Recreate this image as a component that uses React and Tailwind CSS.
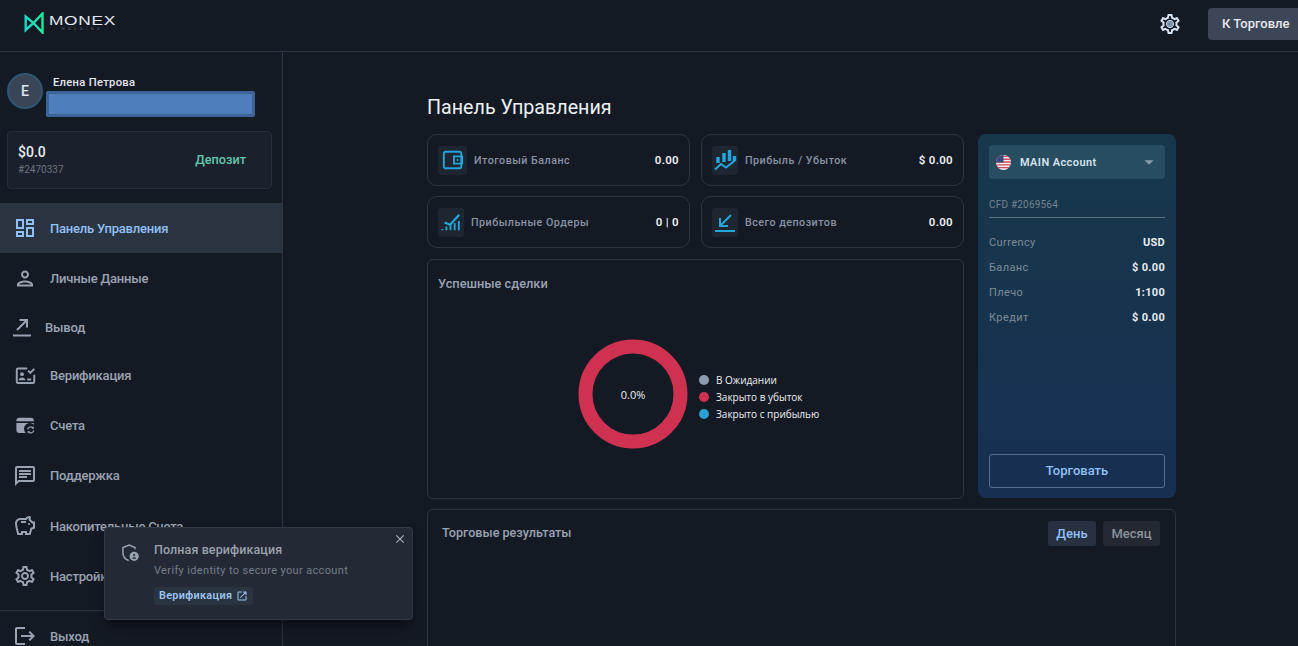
import React from 'react';
import {
  MdOutlineDashboard,
  MdOutlinePerson,
  MdOutlineChat,
  MdOutlineSavings,
  MdOutlineSettings,
  MdOutlineOpenInNew,
  MdClose,
  MdArrowDropDown,
  MdLogout,
} from 'react-icons/md';

const font = 'font-[Roboto,"Liberation_Sans",sans-serif]';

function WithdrawIcon() {
  return (
    <svg viewBox="0 0 24 24" className="h-[24px] w-[24px]" fill="none" stroke="currentColor" strokeWidth="2">
      <path d="M6 15 15.500 5.500M8.500 5h7.500v7.500" transform="translate(1 0)" />
      <path d="M3 20.500h18" />
    </svg>
  );
}

function VerifyIcon() {
  return (
    <svg viewBox="0 0 24 24" className="h-[21px] w-[21px]" fill="none" stroke="currentColor" strokeWidth="2.200">
      <path d="M14 4H3.500A1.500 1.500 0 0 0 2 5.500V19a1.500 1.500 0 0 0 1.500 1.500h17A1.500 1.500 0 0 0 22 19v-8" />
      <circle cx="8" cy="10.500" r="2.200" fill="currentColor" stroke="none" />
      <path d="M4 17.500c.5-2.200 2.200-3.200 4-3.200s3.500 1 4 3.200z" fill="currentColor" stroke="none" />
      <path d="M14 16.500h4.500M15 6.500l2.500 2.500 4.500-4.500" />
    </svg>
  );
}

function AccountsIcon() {
  return (
    <svg viewBox="0 0 24 24" className="h-[21px] w-[21px]" fill="currentColor">
      <path d="M5 3h13a3.500 3.500 0 0 1 3.500 3.500V7H1.600v-.5A3.500 3.500 0 0 1 5 3z" />
      <path d="M1.600 9h19.900v2.200a6.500 6.500 0 0 0-9.300 9.300H5a3.400 3.400 0 0 1-3.400-3.400z" />
      <path d="M14.500 16.500a3.500 3.500 0 0 1 6-1.800M21.500 17.500a3.500 3.500 0 0 1-6 1.800" fill="none" stroke="currentColor" strokeWidth="1.400" />
      <path d="M21.500 12.800v2.800h-2.800zM14.500 21.200v-2.800h2.800z" />
    </svg>
  );
}

function Logo() {
  return (
    <div className="flex items-center gap-[5px]">
      <svg viewBox="0 0 20 22" className="h-[22px] w-[20px]" fill="none" strokeWidth="2.400">
        <defs>
          <linearGradient id="logoMark" x1="0" x2="1" y1="0" y2="0">
            <stop offset="0" stopColor="#1ad6c4" />
            <stop offset="1" stopColor="#19eb9e" />
          </linearGradient>
        </defs>
        <path d="M1.700 4.500v13.500l7.800-7zM18.500 1.500v19L9.500 11z" stroke="url(#logoMark)" />
      </svg>
      <div className="mt-[2px] flex w-[67px] flex-col">
        <span className="block w-max origin-left scale-x-[1.44] text-[12px] leading-[11px] font-medium tracking-[0.5px] text-[#e8ecf2] font-['Liberation_Sans',sans-serif]">MONEX</span>
        <span className="text-center text-[4px] leading-[4px] tracking-[3.500px] text-[#5d6673]">HOLDING</span>
      </div>
    </div>
  );
}

const navItems = [
  { label: 'Панель Управления', icon: <MdOutlineDashboard size={24} />, h: 'h-[50px]', active: true },
  { label: 'Личные Данные', icon: <MdOutlinePerson size={27} />, h: 'h-[50px]' },
  { label: 'Вывод', icon: <WithdrawIcon />, h: 'h-[48px]', narrow: true },
  { label: 'Верификация', icon: <VerifyIcon />, h: 'h-[49px]' },
  { label: 'Счета', icon: <AccountsIcon />, h: 'h-[50px]' },
  { label: 'Поддержка', icon: <MdOutlineChat size={24} />, h: 'h-[51px]' },
  { label: 'Накопительные Счета', icon: <MdOutlineSavings size={24} />, h: 'h-[50px]' },
  { label: 'Настройки', icon: <MdOutlineSettings size={24} />, h: 'h-[50px]' },
];

function NavItem({ item }) {
  return (
    <div
      className={`flex items-center ${item.h} ${item.narrow ? 'pl-[10px] gap-[11px]' : 'pl-[13px] gap-[13px]'} ${
        item.active ? 'bg-[#2a3441] text-[#90c0f8]' : 'text-[#9aa3b2]'
      }`}
    >
      <span className="flex w-[24px] justify-center">{item.icon}</span>
      <span className="pt-[1px] text-[13px] font-medium tracking-[-0.2px]">{item.label}</span>
    </div>
  );
}

function Sidebar() {
  return (
    <aside className="flex h-full w-[283px] shrink-0 flex-col border-r border-[#2d3540]">
      <div className="flex h-[79px] shrink-0 items-start pt-[21px] pl-[7px]">
        <div className="flex h-[36px] w-[36px] items-center justify-center rounded-full border-2 border-[#2f5672] bg-[#3a4658] text-[14px] font-medium text-[#dfe5ee]">
          Е
        </div>
        <div className="ml-[3px] flex flex-col pt-[1px]">
          <span className="ml-[7px] text-[11.200px] leading-[17px] font-medium tracking-[0.3px] text-[#e4e8ee]">Елена Петрова</span>
          <div className="h-[26px] w-[209px] rounded-[2px] border-[3px] border-[#3d6496] bg-[#4e7fbc]" />
        </div>
      </div>
      <div className="mx-[7px] flex h-[58px] w-[265px] shrink-0 items-center justify-between rounded-[4px] border border-[#262e3a] bg-[#1b212c] pr-[25px] pl-[10px]">
        <div>
          <div className="text-[14px] leading-[18px] font-medium text-[#e8ecf2]">$0.0</div>
          <div className="mt-[1px] text-[10px] leading-[16px] text-[#6d7480]">#2470337</div>
        </div>
        <span className="text-[12.700px] font-medium text-[#62c6ad]">Депозит</span>
      </div>
      <nav className="mt-[14px] shrink-0">
        {navItems.map((item) => (
          <NavItem key={item.label} item={item} />
        ))}
      </nav>
      <div className="mt-[9px] shrink-0 border-t border-[#2d3540] pt-[13px] pl-[13px] text-[#9aa3b2]">
        <div className="flex items-center gap-[13px]">
          <MdLogout size={24} />
          <span className="pt-[1px] text-[13px] font-medium tracking-[-0.2px]">Выход</span>
        </div>
      </div>
    </aside>
  );
}

function WalletIcon() {
  return (
    <svg viewBox="0 0 24 24" className="h-[22px] w-[22px]" fill="none" stroke="#22a7dc" strokeWidth="2">
      <rect x="2" y="3" width="19" height="18" rx="2" />
      <path d="M22 8h-9v8h9z" />
      <circle cx="17" cy="12" r="1.200" fill="#22a7dc" stroke="none" />
    </svg>
  );
}

function OrdersIcon() {
  return (
    <svg viewBox="0 0 24 24" className="h-[22px] w-[22px]" fill="none" stroke="#22a7dc">
      <path d="M2.500 21v-1.500M7 21v-4M11.500 21v-6M16 21v-8M20.500 21V11" strokeWidth="2" />
      <path d="M5 12.500 11 15l10-11" strokeWidth="2.400" />
    </svg>
  );
}

function ProfitIcon() {
  return (
    <svg viewBox="0 0 24 24" className="h-[24px] w-[24px]" fill="none" stroke="#22a7dc" strokeWidth="3.400">
      <path d="M5 15V9M11 14V5M16.500 13V2M21.500 13V8" />
      <path d="M2 21.500l6-5.500 5 3.500 9-7" strokeWidth="2" />
    </svg>
  );
}

function DepositIcon() {
  return (
    <svg viewBox="0 0 24 24" className="h-[24px] w-[24px]" fill="none" stroke="#22a7dc" strokeWidth="2">
      <path d="M18 5 7.500 15.500M7 8v8h8" />
      <path d="M2 21h20" />
    </svg>
  );
}

function StatCard({ icon, label, value, wide }) {
  return (
    <div className="flex h-[52px] items-center rounded-[10px] border border-[#2d3540] px-[10px]">
      <span className={`flex h-[29px] items-center justify-center rounded-[3px] bg-[#1e2631] ${wide ? 'w-[29px]' : 'w-[26px]'}`}>{icon}</span>
      <span className="ml-[7px] pt-[2px] text-[10.700px] font-medium tracking-[0.5px] text-[#8a93a3]">{label}</span>
      <span className="ml-auto pt-[2px] text-[11.500px] font-semibold tracking-[0.3px] text-[#eef1f5]">{value}</span>
    </div>
  );
}

function Donut() {
  return (
    <svg viewBox="0 0 110 110" className="h-[110px] w-[110px]">
      <circle cx="55" cy="55" r="47.500" fill="none" stroke="#ce3250" strokeWidth="14" />
    </svg>
  );
}

function Legend({ color, label }) {
  return (
    <div className="flex h-[17px] items-center gap-[7px]">
      <span className={`h-[10px] w-[10px] rounded-full ${color}`} />
      <span className="font-['Open_Sans',sans-serif] text-[10px] text-[#edf0f4]">{label}</span>
    </div>
  );
}

function Row({ label, value }) {
  return (
    <div className="flex h-[25px] items-center justify-between">
      <span className="text-[11px] tracking-[0.4px] text-[#7f8b98]">{label}</span>
      <span className="text-[11px] font-bold tracking-[0.3px] text-[#e8ecf2]">{value}</span>
    </div>
  );
}

function AccountCard() {
  return (
    <div className="flex h-[364px] flex-col rounded-[8px] bg-gradient-to-b from-[#17384a] to-[#172f52] px-[11px] pt-[11px] pb-[10px]">
      <div className="flex h-[34px] items-center rounded-[4px] bg-[#284c60] pr-[5px] pl-[7px]">
        <svg viewBox="0 0 16 16" className="h-[15px] w-[15px] rounded-full">
          <rect width="16" height="16" fill="#f0f0f0" />
          <path d="M0 1.500h16M0 4.500h16M0 7.500h16M0 10.500h16M0 13.500h16" stroke="#d9475a" strokeWidth="1.500" />
          <rect width="8" height="8" fill="#3b4a80" />
        </svg>
        <span className="ml-[9px] pt-[2px] text-[11px] font-semibold tracking-[0.4px] text-[#d3e4f2]">MAIN Account</span>
        <MdArrowDropDown size={22} className="ml-auto text-[#8b9aa8]" />
      </div>
      <div className="mt-[19px] border-b border-[#5a6d7f] pb-[5px] text-[10px] leading-[14px] tracking-[0.2px] text-[#768391]">CFD #2069564</div>
      <div className="mt-[13px]">
        <Row label="Currency" value="USD" />
        <Row label="Баланс" value="$ 0.00" />
        <Row label="Плечо" value="1:100" />
        <Row label="Кредит" value="$ 0.00" />
      </div>
      <button type="button" className="mt-auto h-[34px] rounded-[3px] border border-[#59708c] text-[13px] font-medium text-[#90c0f8]">
        Торговать
      </button>
    </div>
  );
}

function Popup() {
  return (
    <div className="absolute top-[527px] left-[104px] h-[93px] w-[309px] rounded-[4px] border border-[#323a46] bg-[#232a35] shadow-lg shadow-black/40">
      <MdClose size={14} className="absolute top-[4px] right-[5px] text-[#aab2bd]" />
      <svg viewBox="0 0 24 24" className="absolute top-[15px] left-[15px] h-[20px] w-[20px] text-[#9aa3b2]" fill="none" stroke="currentColor" strokeWidth="1.800">
        <path d="M10.500 21C6 19.500 3.500 15.500 3.500 11V5.500L11 2.500l7 3v2" />
        <circle cx="17" cy="16" r="5.500" fill="currentColor" stroke="none" />
        <circle cx="17" cy="14.500" r="1.300" fill="#232a35" stroke="none" />
        <path d="M14.500 19c.4-1.500 1.400-2 2.500-2s2.100.5 2.500 2z" fill="#232a35" stroke="none" />
      </svg>
      <div className="pt-[13px] pl-[49px]">
        <div className="text-[12.500px] leading-[18px] font-medium tracking-[0.1px] text-[#9aa1ac]">Полная верификация</div>
        <div className="mt-[4px] text-[11px] leading-[15px] tracking-[0.35px] text-[#757d89]">Verify identity to secure your account</div>
        <div className="mt-[9px] inline-flex h-[18px] items-center gap-[4px] rounded-[3px] bg-[#2a3340] px-[5px] text-[10.800px] font-semibold tracking-[0.35px] text-[#9cc4f5]">
          Верификация
          <MdOutlineOpenInNew size={12} />
        </div>
      </div>
    </div>
  );
}

export default function App() {
  return (
    <div className={`relative h-[646px] w-[1298px] overflow-hidden bg-[#141a24] ${font}`}>
      <header className="flex h-[52px] items-center justify-between border-b border-[#2d3540]">
        <div className="ml-[24px] -mt-[6px]">
          <Logo />
        </div>
        <div className="-mt-[4px] flex items-center gap-[26px]">
          <span className="relative text-[#d4e2f2]">
            <MdOutlineSettings size={24} />
            <span className="absolute top-[9px] left-[9px] h-[6px] w-[6px] rounded-full bg-[#7d8ea3]" />
          </span>
          <button type="button" className="h-[32px] w-[90px] rounded-l-[4px] bg-[#3d4657] pt-[1px] pl-[14px] text-left text-[13px] font-medium text-[#e4e9f0]">
            К Торговле
          </button>
        </div>
      </header>
      <div className="flex h-[594px]">
        <Sidebar />
        <main className="pl-[144px]">
          <h1 className="pt-[43px] text-[19.700px] leading-[26px] text-[#eef1f5]">Панель Управления</h1>
          <div className="mt-[13px] flex gap-[14px]">
            <div className="w-[537px]">
              <div className="grid grid-cols-2 gap-x-[11px] gap-y-[10px]">
                <StatCard wide icon={<WalletIcon />} label="Итоговый Баланс" value="0.00" />
                <StatCard icon={<ProfitIcon />} label="Прибыль / Убыток" value="$ 0.00" />
                <StatCard icon={<OrdersIcon />} label="Прибыльные Ордеры" value="0 | 0" />
                <StatCard icon={<DepositIcon />} label="Всего депозитов" value="0.00" />
              </div>
              <section className="mt-[11px] h-[240px] rounded-[6px] border border-[#2d3540] px-[10px] pt-[15px]">
                <h2 className="text-[12.800px] leading-[18px] font-medium text-[#9aa3b2]">Успешные сделки</h2>
                <div className="mt-[46px] ml-[140px] flex items-center gap-[11px]">
                  <div className="relative">
                    <Donut />
                    <span className="absolute inset-0 flex items-center justify-center pt-[3px] font-['Open_Sans',sans-serif] text-[11px] text-[#e8ecf2]">0.0%</span>
                  </div>
                  <div className="mt-[6px]">
                    <Legend color="bg-[#8e9bb3]" label="В Ожидании" />
                    <Legend color="bg-[#ce3250]" label="Закрыто в убыток" />
                    <Legend color="bg-[#2a9fd0]" label="Закрыто с прибылью" />
                  </div>
                </div>
              </section>
            </div>
            <div className="w-[198px]">
              <AccountCard />
            </div>
          </div>
          <section className="mt-[10px] h-[200px] w-[749px] rounded-[6px] border border-[#2d3540] pt-[11px] pr-[15px] pl-[14px]">
            <div className="flex items-center justify-between">
              <h2 className="text-[12.600px] font-medium text-[#9aa3b2]">Торговые результаты</h2>
              <div className="flex gap-[7px]">
                <span className="flex h-[25px] w-[48px] items-center justify-center rounded-[3px] bg-[#283140] text-[13px] font-medium text-[#90c0f8]">День</span>
                <span className="flex h-[25px] w-[57px] items-center justify-center rounded-[3px] bg-[#232832] text-[13px] font-medium text-[#8a919c]">Месяц</span>
              </div>
            </div>
          </section>
        </main>
      </div>
      <Popup />
    </div>
  );
}
